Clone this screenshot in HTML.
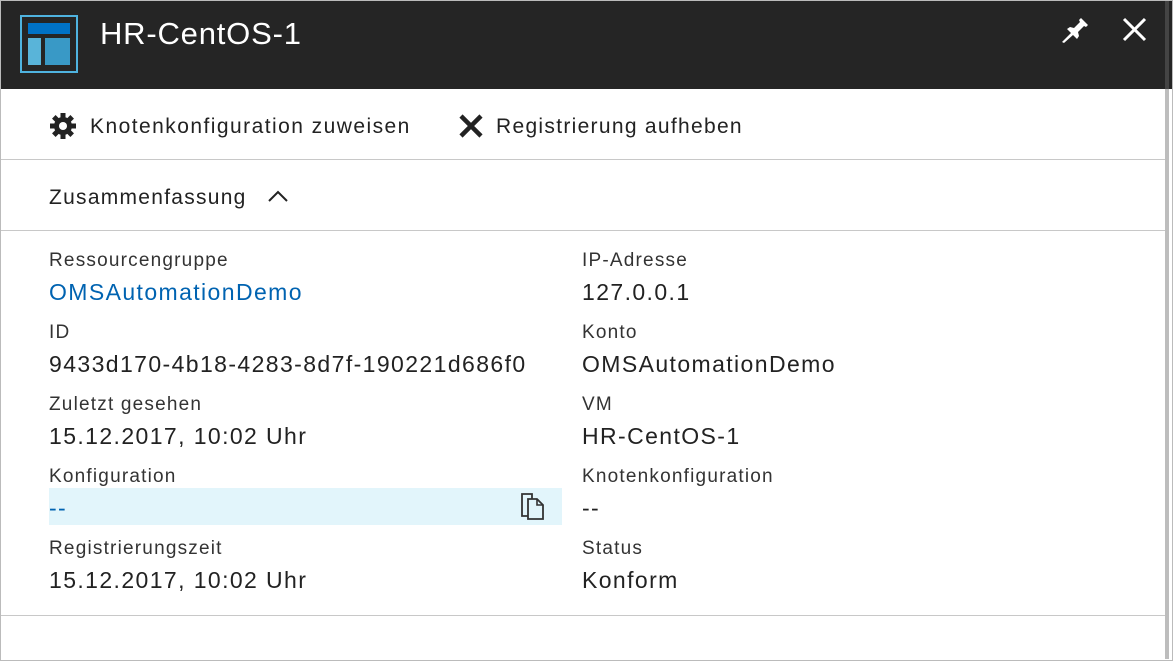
<!DOCTYPE html>
<html><head><style>
body{margin:0;width:1173px;height:661px;overflow:hidden;background:#fff;font-family:"Liberation Sans",sans-serif;position:relative}
.a{position:absolute;white-space:nowrap}
.lbl{font-size:19px;color:#333;letter-spacing:1.2px}
.val{font-size:23px;color:#222;letter-spacing:1.4px}
</style></head><body>
<div class="a" style="left:0;top:0;width:1171px;height:659px;border:1px solid #bbb"></div>
<div class="a" style="left:1px;top:1px;width:1171px;height:88px;background:#252525"></div>
<div class="a" style="left:1165px;top:1px;width:4px;height:658px;background:#bdbdbd"></div>
<div class="a" style="left:1165px;top:1px;width:4px;height:88px;background:#444"></div>
<svg class="a" style="left:20px;top:15px" width="58" height="58">
<rect x="1" y="1" width="56" height="56" fill="none" stroke="#4fb3df" stroke-width="2"/>
<rect x="2" y="2" width="54" height="54" fill="#252525"/>
<rect x="8" y="8" width="42" height="11" fill="#0072c6"/>
<rect x="8" y="23" width="13" height="27" fill="#59b4d9"/>
<rect x="25" y="23" width="25" height="27" fill="#3999c6"/>
</svg>
<div class="a" style="left:100px;top:16px;font-size:31px;color:#fff;letter-spacing:0.8px">HR-CentOS-1</div>
<svg class="a" style="left:1060px;top:15px" width="30" height="30" viewBox="0 0 30 30"><path d="M2 27 L11 18 L7 14 L10 12 L14 13 L20 7 L19 5 L21 3 L28 10 L26 12 L24 11 L18 17 L19 21 L17 24 L13 20 L4 28Z" fill="#fff"/></svg>
<svg class="a" style="left:1122px;top:17px" width="25" height="25"><path d="M2 2L23 23M23 2L2 23" stroke="#fff" stroke-width="3"/></svg>
<svg class="a" style="left:49px;top:112px" width="28" height="28" viewBox="0 0 28 28"><g fill="#222"><circle cx="14" cy="14" r="9"/><g stroke="#222" stroke-width="5"><path d="M14 1v26M1 14h26M4.8 4.8l18.4 18.4M23.2 4.8L4.8 23.2"/></g></g><circle cx="14" cy="14" r="4" fill="#fff"/></svg>
<div class="a" style="left:90px;top:115px;font-size:21px;color:#222;letter-spacing:1.45px">Knotenkonfiguration zuweisen</div>
<svg class="a" style="left:458px;top:113px" width="26" height="26"><path d="M3 3L23 23M23 3L3 23" stroke="#222" stroke-width="4.5"/></svg>
<div class="a" style="left:496px;top:115px;font-size:21px;color:#222;letter-spacing:1.3px">Registrierung aufheben</div>
<div class="a" style="left:1px;top:159px;width:1164px;height:1px;background:#c8c8c8"></div>
<div class="a" style="left:49px;top:186px;font-size:21px;color:#222;letter-spacing:1.27px">Zusammenfassung</div>
<svg class="a" style="left:267px;top:189px" width="22" height="14"><path d="M2 12L11 3L20 12" stroke="#222" stroke-width="2" fill="none"/></svg>
<div class="a" style="left:1px;top:230px;width:1164px;height:1px;background:#c8c8c8"></div>
<div class="a" style="left:49px;top:488px;width:513px;height:37px;background:#e2f5fb"></div>
<svg class="a" style="left:520px;top:492px" width="30" height="30" viewBox="0 0 30 30"><path d="M2 2h10l0 22h-10z" fill="none" stroke="#333" stroke-width="1.8"/><path d="M8 7h9l6 6v14h-15z" fill="#e2f5fb" stroke="#333" stroke-width="1.8"/><path d="M17 7v6h6" fill="none" stroke="#333" stroke-width="1.6"/></svg>
<div class="a lbl" style="left:49px;top:250px">Ressourcengruppe</div>
<div class="a val" style="left:49px;top:279px;color:#0063b1">OMSAutomationDemo</div>
<div class="a lbl" style="left:49px;top:322px">ID</div>
<div class="a val" style="left:49px;top:351px">9433d170-4b18-4283-8d7f-190221d686f0</div>
<div class="a lbl" style="left:49px;top:394px">Zuletzt gesehen</div>
<div class="a val" style="left:49px;top:423px">15.12.2017, 10:02 Uhr</div>
<div class="a lbl" style="left:49px;top:466px">Konfiguration</div>
<div class="a val" style="left:49px;top:495px;color:#0063b1">--</div>
<div class="a lbl" style="left:49px;top:538px">Registrierungszeit</div>
<div class="a val" style="left:49px;top:567px">15.12.2017, 10:02 Uhr</div>
<div class="a lbl" style="left:582px;top:250px">IP-Adresse</div>
<div class="a val" style="left:582px;top:279px">127.0.0.1</div>
<div class="a lbl" style="left:582px;top:322px">Konto</div>
<div class="a val" style="left:582px;top:351px">OMSAutomationDemo</div>
<div class="a lbl" style="left:582px;top:394px">VM</div>
<div class="a val" style="left:582px;top:423px">HR-CentOS-1</div>
<div class="a lbl" style="left:582px;top:466px">Knotenkonfiguration</div>
<div class="a val" style="left:582px;top:495px">--</div>
<div class="a lbl" style="left:582px;top:538px">Status</div>
<div class="a val" style="left:582px;top:567px">Konform</div>
<div class="a" style="left:1px;top:615px;width:1164px;height:1px;background:#c8c8c8"></div>
</body></html>
